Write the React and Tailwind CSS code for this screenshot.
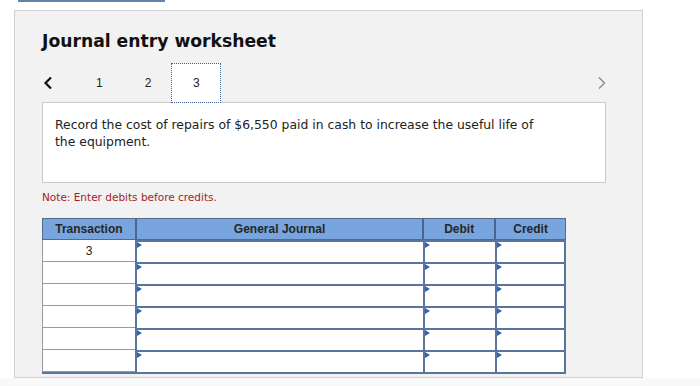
import React from 'react';

const cols = [
  { key: 'tx', label: 'Transaction', w: 'w-[93px]' },
  { key: 'gj', label: 'General Journal', w: 'w-[288px]' },
  { key: 'dr', label: 'Debit', w: 'w-[72px]' },
  { key: 'cr', label: 'Credit', w: 'w-[71px]' },
];

const rows = ['3', '', '', '', '', ''];

const Marker = () => (
  <span className="absolute top-0 left-0 w-0 h-0 border-l-[5px] border-l-[#2f66b3] border-y-[3px] border-y-transparent" />
);

const InputCell = ({ w, last }) => (
  <div className={`${w} h-[22px] relative bg-white border-t-2 border-l-2 border-[#57759f] ${last ? 'border-r-2' : ''}`}>
    <Marker />
  </div>
);

export default function App() {
  return (
    <div className="w-[700px] h-[386px] bg-white overflow-hidden" style={{ fontFamily: '"DejaVu Sans", Verdana, sans-serif' }}>
      {/* tab strip stub at the very top */}
      <div className="ml-[18px] w-[147px] h-[2px] bg-[#6485a8]" />

      <div className="ml-[14px] mt-[8px] w-[629px] h-[368px] bg-[#f2f2f2] border border-[#d2d2d2] pl-[27px] pt-[19px]">
        <h1 className="text-[17.2px] leading-[22px] font-bold text-[#111]">Journal entry worksheet</h1>

        {/* pager */}
        <div className="mt-[11px] h-[40px] w-[565px] flex items-center relative z-10 -mb-[1px]">
          <svg width="10" height="14" viewBox="0 0 10 14" className="ml-[1px]">
            <path d="M8 1.5 L2.5 7 L8 12.5" fill="none" stroke="#111" strokeWidth="2.2" />
          </svg>
          <span className="ml-[43px] text-[12px] text-[#222]" style={{ fontFamily: '"Liberation Sans", Arial, sans-serif' }}>1</span>
          <span className="ml-[42px] text-[12px] text-[#222]" style={{ fontFamily: '"Liberation Sans", Arial, sans-serif' }}>2</span>
          <div className="ml-[20px] w-[50px] h-[40px] bg-white border border-dotted border-[#3d5f8f] flex items-center justify-center text-[12px] text-[#222]" style={{ fontFamily: '"Liberation Sans", Arial, sans-serif' }}>
            3
          </div>
          <svg width="10" height="14" viewBox="0 0 10 14" className="ml-auto">
            <path d="M2 1.5 L7.5 7 L2 12.5" fill="none" stroke="#8a8a8a" strokeWidth="1.4" />
          </svg>
        </div>

        {/* question box */}
        <div className="w-[564px] h-[81px] bg-white border border-[#c9c9c9] px-[12px] pt-[13px]">
          <p className="w-[500px] text-[12.4px] leading-[17px] text-[#222]">
            Record the cost of repairs of $6,550 paid in cash to increase the useful life of the equipment.
          </p>
        </div>

        <p className="mt-[8px] text-[10.5px] leading-[13px] text-[#a51d24]">Note: Enter debits before credits.</p>

        {/* journal table */}
        <div className="mt-[14px] w-[524px]" style={{ fontFamily: '"Liberation Sans", Arial, sans-serif' }}>
          <div className="flex h-[22px] bg-[#78a5de] border border-[#56698a]">
            {cols.map((c, i) => (
              <div
                key={c.key}
                className={`${i === 0 ? 'w-[92px]' : c.w} ${i > 0 ? 'border-l-2 border-[#4f6688]' : ''} flex items-center justify-center text-[12px] font-bold text-[#262626]`}
              >
                {c.label}
              </div>
            ))}
          </div>
          {rows.map((r, ri) => (
            <div key={ri} className={`flex ${ri === rows.length - 1 ? 'border-b-2 border-[#57759f]' : ''}`}>
              <div className="w-[93px] h-[22px] bg-white border-l border-b border-[#9a9a9a] flex items-center justify-center text-[12px] text-[#222]">
                {r}
              </div>
              <InputCell w="w-[288px]" />
              <InputCell w="w-[72px]" />
              <InputCell w="w-[71px]" last />
            </div>
          ))}
        </div>
      </div>
      <div className="h-[8px] bg-[#f9f9f9]" />
    </div>
  );
}
